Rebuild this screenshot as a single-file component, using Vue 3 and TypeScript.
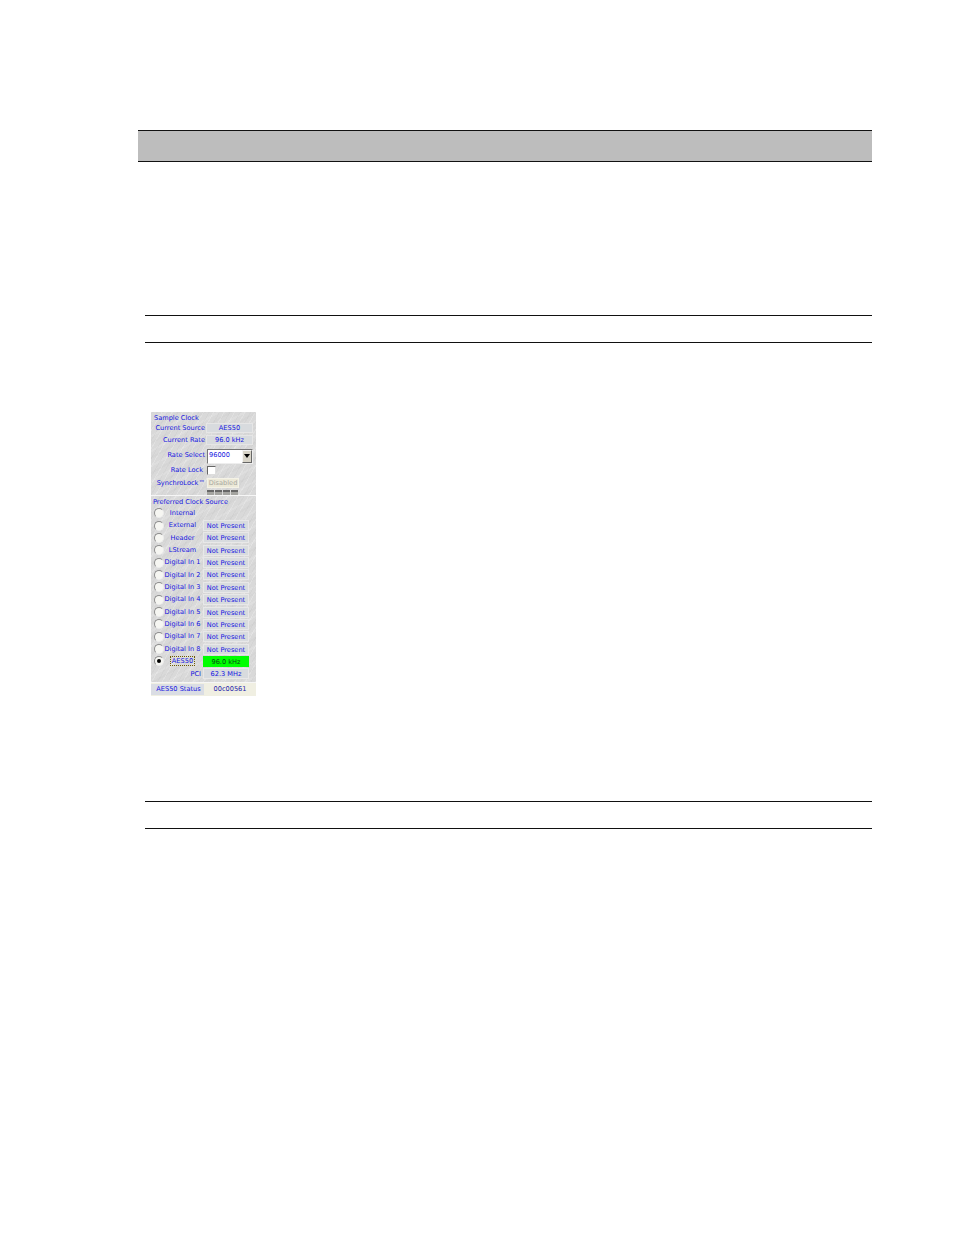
<script setup lang="ts">
interface ClockRow {
  label: string
  value: string
  selected?: boolean
}

const clockRows: ClockRow[] = [
  { label: 'Internal', value: '' },
  { label: 'External', value: 'Not Present' },
  { label: 'Header', value: 'Not Present' },
  { label: 'LStream', value: 'Not Present' },
  { label: 'Digital In 1', value: 'Not Present' },
  { label: 'Digital In 2', value: 'Not Present' },
  { label: 'Digital In 3', value: 'Not Present' },
  { label: 'Digital In 4', value: 'Not Present' },
  { label: 'Digital In 5', value: 'Not Present' },
  { label: 'Digital In 6', value: 'Not Present' },
  { label: 'Digital In 7', value: 'Not Present' },
  { label: 'Digital In 8', value: 'Not Present' },
  { label: 'AES50', value: '96.0 kHz', selected: true },
]
</script>

<template>
  <main class="page">
    <div class="band"></div>
    <div class="rule-pair first"></div>
    <section class="panel">
      <div class="clock">
        <div class="title">Sample Clock</div>
        <div class="line h12">
          <span class="lab">Current Source</span><span class="box wide">AES50</span>
        </div>
        <div class="line h12">
          <span class="lab">Current Rate</span><span class="box wide">96.0 kHz</span>
        </div>
        <div class="line h19">
          <span class="lab">Rate Select</span>
          <span class="select"><span class="sel-text">96000</span><span class="arrow"><i></i></span></span>
        </div>
        <div class="line h10">
          <span class="lab lock">Rate Lock</span><span class="check"></span>
        </div>
        <div class="line h12 synchro">
          <span class="lab">SynchroLock™</span><span class="disabled">Disabled</span>
        </div>
        <div class="leds"><i></i><i></i><i></i><i></i></div>
      </div>
      <div class="pref">
        <div class="title">Preferred Clock Source</div>
        <div class="rows">
          <div v-for="row in clockRows" :key="row.label" class="row">
            <span class="radio" :class="{ on: row.selected }"></span>
            <span class="name"><span :class="{ focus: row.selected }">{{ row.label }}</span></span>
            <span v-if="row.value" class="val" :class="{ green: row.selected }">{{ row.value }}</span>
          </div>
          <div class="row">
            <span class="pci">PCI</span>
            <span class="val">62.3 MHz</span>
          </div>
        </div>
      </div>
      <div class="status">
        <span class="status-lab">AES50 Status</span><span class="status-val">00c00561</span>
      </div>
    </section>
    <div class="rule-pair second"></div>
  </main>
</template>

<style>
html, body { margin: 0; background: #fff; }
</style>

<style scoped>
.page {
  width: 954px;
  height: 1235px;
  box-sizing: border-box;
  padding: 130px 82px 0 138px;
  background: #fff;
  font-family: "DejaVu Sans", "Liberation Sans", sans-serif;
}
.band {
  height: 30px;
  background: #bdbdbd;
  border-top: 1px solid #111;
  border-bottom: 1px solid #111;
}
.rule-pair {
  height: 26px;
  margin-left: 7px;
  border-top: 1px solid #111;
  border-bottom: 1px solid #111;
}
.rule-pair.first { margin-top: 153px; }
.rule-pair.second { margin-top: 105px; }
.panel {
  width: 105px;
  height: 284px;
  margin: 69px 0 0 13px;
  display: flex;
  flex-direction: column;
  color: #1414e0;
  font-size: 6.6px;
  line-height: 1;
  white-space: nowrap;
  background-color: #d9d9d9;
  background-image:
    repeating-linear-gradient(120deg, rgba(255,255,255,.2) 0 1px, transparent 1px 5px, rgba(0,0,0,.025) 5px 6px, transparent 6px 9px),
    repeating-linear-gradient(150deg, rgba(0,0,0,.02) 0 2px, transparent 2px 7px, rgba(255,255,255,.14) 7px 9px, transparent 9px 13px);
}
.clock {
  height: 84px;
  box-sizing: border-box;
  padding: 2px 0 0 3px;
  border-bottom: 1px solid #f6f6f6;
}
.title { height: 8px; line-height: 8px; }
.line { display: flex; align-items: center; }
.h10 { height: 10px; }
.h12 { height: 12px; }
.h19 { height: 19px; }
.synchro { margin-top: 2px; }
.lab {
  width: 51px;
  text-align: right;
  flex: none;
}
.lock { padding-right: 2px; width: 49px; }
.box {
  width: 47px;
  height: 10px;
  line-height: 8px;
  margin-left: 1px;
  text-align: center;
  background: #d8dbde;
  border: 1px solid #e6e6e6;
  box-sizing: border-box;
}
.select {
  width: 46px;
  height: 15px;
  margin: 1px 0 0 2px;
  display: flex;
  align-items: stretch;
  background: #fff;
  border: 1px solid;
  border-color: #777 #eee #eee #777;
  box-sizing: border-box;
}
.sel-text { flex: 1; padding-left: 1px; line-height: 11px; }
.arrow {
  width: 10px;
  display: flex;
  align-items: center;
  justify-content: center;
  background: #d8d4c8;
  border: 1px solid;
  border-color: #f4f4f4 #666 #666 #f4f4f4;
  box-sizing: border-box;
}
.arrow i {
  width: 0;
  height: 0;
  border-left: 3px solid transparent;
  border-right: 3px solid transparent;
  border-top: 4px solid #000;
}
.check {
  width: 9px;
  height: 9px;
  margin-left: 2px;
  background: #fff;
  border: 1px solid;
  border-color: #666 #ddd #ddd #666;
  box-sizing: border-box;
}
.disabled {
  width: 32px;
  height: 10px;
  margin-left: 2px;
  text-align: center;
  color: #a8a8a0;
  background: #ece9d8;
  border: 1px solid #f4f2e6;
  box-sizing: border-box;
  line-height: 8px;
}
.leds {
  display: flex;
  gap: 1px;
  margin: 1px 0 0 53px;
}
.leds i {
  width: 7px;
  height: 5px;
  background: #a4a4a0;
  border-top: 2px solid #666;
  box-sizing: border-box;
}
.pref { height: 186px; padding: 2px 0 0 2px; box-sizing: border-box; }
.pref .title { height: 9px; line-height: 9px; }
.row {
  height: 12.37px;
  display: flex;
  align-items: center;
}
.radio {
  width: 10px;
  height: 10px;
  margin-left: 1px;
  border-radius: 50%;
  background: #f6f6f2;
  border: 1px solid;
  border-color: #8c8c8c #ececec #ececec #8c8c8c;
  box-sizing: border-box;
  flex: none;
  position: relative;
}
.radio.on::after {
  content: "";
  position: absolute;
  left: 2px;
  top: 2px;
  width: 4px;
  height: 4px;
  border-radius: 50%;
  background: #000;
}
.name {
  width: 37px;
  flex: none;
  text-align: center;
}
.focus {
  outline: 1px dotted #6e5a00;
  padding: 0 1px;
}
.val {
  width: 46px;
  height: 11px;
  line-height: 10px;
  margin-left: 2px;
  text-align: center;
  background: #d8dbde;
  border: 1px solid #e8e8e8;
  box-sizing: border-box;
}
.green {
  background: #00ff00;
  border-color: #00ff00;
  color: #064a18;
}
.pci {
  margin-left: 36px;
  width: 12px;
  text-align: right;
}
.status {
  flex: 1;
  display: flex;
  align-items: center;
  background: #f0efe2;
  border-top: 1px solid #f6f6f6;
}
.status-lab {
  width: 51px;
  height: 11px;
  line-height: 11px;
  padding-left: 2px;
  text-align: center;
  background: #dadde4;
}
.status-val {
  flex: 1;
  text-align: center;
  color: #2222aa;
}
</style>
